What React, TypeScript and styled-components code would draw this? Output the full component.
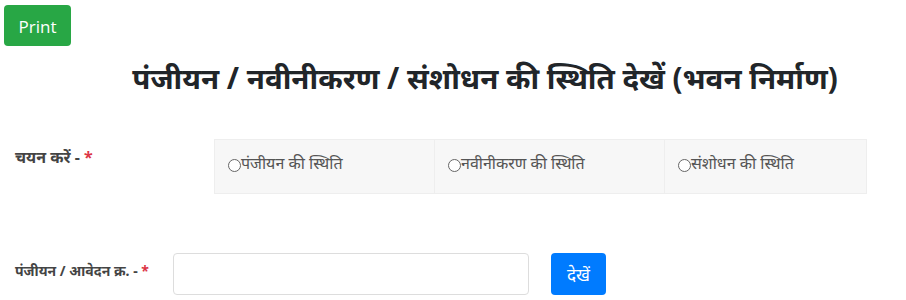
import styled, { createGlobalStyle } from "styled-components";

const GlobalStyle = createGlobalStyle`
  body {
    margin: 0;
    background: #ffffff;
    font-family: "Noto Sans", "Open Sans", sans-serif;
    color: #212529;
  }
`;

const Page = styled.div`
  width: 906px;
  height: 300px;
  overflow: hidden;
  padding: 5px 0 0 4px;
  box-sizing: border-box;
`;

const PrintButton = styled.button`
  width: 67px;
  height: 41px;
  padding-top: 3px;
  background: #28a745;
  border: none;
  border-radius: 4px;
  color: #ffffff;
  font-family: "Open Sans", sans-serif;
  font-size: 17px;
  cursor: pointer;
`;

const Title = styled.h2`
  margin: 11px 0 0 0;
  text-align: center;
  font-size: 29.5px;
  font-weight: 700;
  line-height: 42px;
  color: #212529;
  padding-left: 60px;
`;

const FormRow = styled.div<{ $top: number }>`
  display: flex;
  align-items: flex-start;
  margin-top: ${(p) => p.$top}px;
  padding-left: 11px;
`;

const Label = styled.label<{ $width: number; $pad: number; $size: number }>`
  width: ${(p) => p.$width}px;
  flex-shrink: 0;
  padding-top: ${(p) => p.$pad}px;
  font-size: ${(p) => p.$size}px;
  font-weight: 700;
  color: #444444;
`;

const Required = styled.span`
  color: #dc3545;
`;

const RadioGroup = styled.div`
  display: flex;
  height: 55px;
  background: #f7f7f7;
  border: 1px solid #eeeeee;
  box-sizing: border-box;
`;

const RadioCell = styled.label<{ $width: number; $last?: boolean }>`
  width: ${(p) => p.$width}px;
  display: flex;
  align-items: flex-start;
  padding: 12px 0 0 13px;
  box-sizing: border-box;
  border-right: ${(p) => (p.$last ? "none" : "1px solid #eeeeee")};
  font-size: 16px;
  color: #555555;
  cursor: pointer;
`;

const RadioCircle = styled.span`
  width: 11px;
  height: 11px;
  border: 1px solid #666666;
  border-radius: 50%;
  margin-top: 7px;
  flex-shrink: 0;
  background: #ffffff;
`;

const Input = styled.input`
  width: 356px;
  height: 42px;
  box-sizing: border-box;
  border: 1px solid #dddddd;
  border-radius: 4px;
  padding: 6px 12px;
  font-size: 14px;
`;

const ViewButton = styled.button`
  margin-left: 22px;
  width: 55px;
  height: 42px;
  background: #007bff;
  border: none;
  border-radius: 4px;
  color: #ffffff;
  font-family: "Noto Sans", sans-serif;
  font-size: 17px;
  cursor: pointer;
`;

const options = [
  { text: "पंजीयन की स्थिति", width: 220 },
  { text: "नवीनीकरण की स्थिति", width: 230 },
  { text: "संशोधन की स्थिति", width: 201 },
];

export default function App() {
  return (
    <>
      <GlobalStyle />
      <Page>
        <PrintButton>Print</PrintButton>
        <Title>पंजीयन / नवीनीकरण / संशोधन की स्थिति देखें (भवन निर्माण)</Title>
        <FormRow $top={40}>
          <Label $width={199} $pad={7} $size={16}>
            चयन करें - <Required>*</Required>
          </Label>
          <RadioGroup>
            {options.map((o, i) => (
              <RadioCell key={o.text} $width={o.width} $last={i === options.length - 1}>
                <RadioCircle />
                {o.text}
              </RadioCell>
            ))}
          </RadioGroup>
        </FormRow>
        <FormRow $top={59}>
          <Label $width={158} $pad={8} $size={14}>
            पंजीयन / आवेदन क्र. - <Required>*</Required>
          </Label>
          <Input type="text" />
          <ViewButton>देखें</ViewButton>
        </FormRow>
      </Page>
    </>
  );
}
